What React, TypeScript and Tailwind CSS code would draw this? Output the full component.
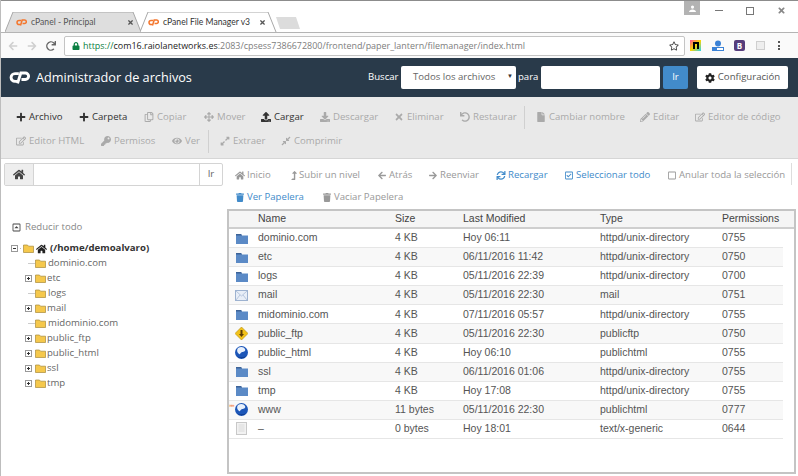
import React from "react";
import {
  FaPlus, FaRegCopy, FaArrowsAlt, FaUpload, FaDownload, FaTimes, FaUndo, FaFile, FaPencilAlt, FaRegEdit,
  FaKey, FaEye, FaExpandAlt, FaCompressAlt, FaHome, FaLevelUpAlt, FaArrowLeft, FaArrowRight, FaSync,
  FaRegCheckSquare, FaRegSquare, FaTrash, FaCog, FaRegCaretSquareUp, FaRegStar, FaLock, FaRedo,
} from "react-icons/fa";

const OPEN = "font-['Open_Sans',sans-serif]";

function CpLogo({ color, className }: { color: string; className: string }) {
  return (
    <svg viewBox="0 0 32 20" className={className} fill="none">
      <path d="M15 4H9a6 6 0 0 0 0 12h4" stroke={color} strokeWidth="4.4" />
      <path d="M13 19 18 3h7a5 5 0 0 1 0 10h-6" stroke={color} strokeWidth="4.4" />
    </svg>
  );
}

function Tab({ title, active }: { title: string; active?: boolean }) {
  return (
    <div className={`relative flex h-[20px] w-[137px] items-center ${active ? "z-10 pl-[8px] pr-[11px]" : "-mr-[2px] pl-[11px] pr-[8px]"}`}>
      <svg viewBox="0 0 137 20" preserveAspectRatio="none" className="absolute inset-0 h-full w-full">
        <path d="M0 20 8 0H128L136 20" fill={active ? "#ffffff" : "#dedede"} stroke="#a8a8a8" strokeWidth="1" />
      </svg>
      <CpLogo color="#f4772e" className="relative h-[9px] w-[11px] shrink-0" />
      <span className={`relative ml-[4px] flex-1 whitespace-nowrap font-['Lato',sans-serif] text-[8.6px] ${active ? "text-[#333]" : "text-[#555]"}`}>{title}</span>
      <FaTimes className="relative h-[7px] w-[7px] shrink-0 text-[#555]" />
    </div>
  );
}

function ChromeBar() {
  return (
    <div className="flex h-[58px] flex-col bg-white">
      <div className="h-px bg-[#8c8c8c]" />
      <div className="relative flex h-[32px] items-end border-b border-[#b4b4b4] pl-[4px]">
        <Tab title="cPanel - Principal" />
        <Tab title="cPanel File Manager v3" active />
        <svg viewBox="0 0 24 12" className="mb-[3px] ml-[-1px] h-[12px] w-[24px]">
          <path d="M0 0H20L24 12H4Z" fill="#dcdcdc" />
        </svg>
        <div className="flex-1" />
        <div className="absolute right-[98px] top-0 flex h-[14px] w-[16px] items-center justify-center bg-[#b3b3b3]">
          <svg viewBox="0 0 8 8" className="h-[7px] w-[7px]" fill="#fff">
            <circle cx="4" cy="2.4" r="1.8" /><path d="M0 8c0-2 2-3 4-3s4 1 4 3Z" />
          </svg>
        </div>
        <div className="absolute right-[12px] top-[5px] flex items-center gap-[23px]">
          <div className="h-px w-[8px] bg-[#777]" />
          <div className="h-[8px] w-[8px] border border-[#777]" />
          <FaTimes className="h-[9px] w-[9px] text-[#888]" />
        </div>
      </div>
      <div className="flex flex-1 items-center bg-[#fafafa] pl-[7px]">
        <FaArrowLeft className="h-[10px] w-[10px] text-[#cfcfcf]" />
        <FaArrowRight className="ml-[9px] h-[10px] w-[10px] text-[#cfcfcf]" />
        <FaRedo className="ml-[9px] h-[10px] w-[10px] text-[#666]" />
        <div className={`ml-[8px] flex h-[20px] w-[621px] items-center rounded-[2px] border border-[#c4c4c4] bg-white pl-[7px] pr-[5px] text-[8.95px] ${OPEN}`}>
          <FaLock className="h-[8px] w-[8px] text-[#0b8043]" />
          <span className="ml-[3px] text-[#0b8043]">https://</span>
          <span className="text-[#222]">com16.raiolanetworks.es</span>
          <span className="flex-1 text-[#7d7d7d]">:2083/cpsess7386672800/frontend/paper_lantern/filemanager/index.html</span>
          <FaRegStar className="h-[10px] w-[10px] text-[#444]" />
        </div>
        <div className="ml-[5px] flex items-center">
          <div className="flex h-[11px] w-[11px] items-center justify-center bg-[linear-gradient(135deg,#ff4f9a,#ffd400,#22d3ee)]">
            <div className="h-[7px] w-[6px] border-x-2 border-t-2 border-black" />
          </div>
          <svg viewBox="0 0 12 12" className="ml-[11px] h-[12px] w-[12px]">
            <circle cx="6" cy="3.5" r="3" fill="#3b82d6" />
            <rect x="0" y="7" width="12" height="4" fill="#3b82d6" />
            <rect x="5" y="8" width="6" height="2" fill="#fff" />
          </svg>
          <div className={`ml-[10px] flex h-[11px] w-[11px] items-center justify-center rounded-[2px] bg-[#563d7c] text-[8px] font-bold leading-none text-white ${OPEN}`}>B</div>
          <div className="ml-[11px] h-[9px] w-[9px] border border-[#cfcfcf] bg-[#eee]" />
          <div className="ml-[13px] flex flex-col gap-[1.5px]">
            <div className="h-[2px] w-[2px] bg-[#555]" />
            <div className="h-[2px] w-[2px] bg-[#555]" />
            <div className="h-[2px] w-[2px] bg-[#555]" />
          </div>
        </div>
      </div>
    </div>
  );
}

function Header() {
  return (
    <div className={`flex h-[39px] items-center whitespace-nowrap bg-[#293a4a] pl-[8px] text-[9.6px] text-white ${OPEN}`}>
      <CpLogo color="#ffffff" className="h-[13px] w-[21px]" />
      <span className="ml-[6px] w-[150px] text-[12.7px]">Administrador de archivos</span>
      <span className="ml-[182px] w-[30px]">Buscar</span>
      <div className="relative ml-[3px] flex h-[23px] w-[115px] items-center rounded-[2px] bg-white pl-[12px] text-[#666]">
        Todos los archivos
        <span className="absolute right-[3px] top-[6px] text-[6px] text-[#333]">▼</span>
      </div>
      <span className="ml-[2px] w-[20px]">para</span>
      <div className="ml-[3px] h-[23px] w-[119px] rounded-[2px] bg-white" />
      <div className="ml-[3px] flex h-[23px] w-[25px] items-center justify-center rounded-[2px] bg-[#428bca]">Ir</div>
      <div className="ml-[9px] flex h-[23px] w-[91px] items-center justify-center gap-[3px] rounded-[2px] bg-white text-[#555]">
        <FaCog className="h-[10px] w-[10px] text-[#222]" />Configuración
      </div>
    </div>
  );
}

type Item = { icon: React.ComponentType<{ className?: string }>; label: string; dark?: boolean; w: number };

function Tool({ it }: { it: Item }) {
  const I = it.icon;
  return (
    <div className={`flex items-center whitespace-nowrap ${it.dark ? "text-[#333]" : "text-[#aaa]"}`} style={{ width: it.w }}>
      <I className="mr-[3px] h-[10px] w-[10px] shrink-0" />
      <span>{it.label}</span>
    </div>
  );
}

const row1: Item[] = [
  { icon: FaPlus, label: "Archivo", dark: true, w: 63 },
  { icon: FaPlus, label: "Carpeta", dark: true, w: 65 },
  { icon: FaRegCopy, label: "Copiar", w: 60 },
  { icon: FaArrowsAlt, label: "Mover", w: 57 },
  { icon: FaUpload, label: "Cargar", dark: true, w: 59 },
  { icon: FaDownload, label: "Descargar", w: 74 },
  { icon: FaTimes, label: "Eliminar", w: 66 },
  { icon: FaUndo, label: "Restaurar", w: 64 },
];
const row1b: Item[] = [
  { icon: FaFile, label: "Cambiar nombre", w: 104 },
  { icon: FaPencilAlt, label: "Editar", w: 55 },
  { icon: FaRegEdit, label: "Editor de código", w: 90 },
];
const row2: Item[] = [
  { icon: FaRegEdit, label: "Editor HTML", w: 85 },
  { icon: FaKey, label: "Permisos", w: 71 },
  { icon: FaEye, label: "Ver", w: 36 },
];
const row2b: Item[] = [
  { icon: FaExpandAlt, label: "Extraer", w: 61 },
  { icon: FaCompressAlt, label: "Comprimir", w: 70 },
];

function Toolbar() {
  return (
    <div className={`flex h-[62px] flex-col gap-[1px] border-b border-[#d6d6d6] bg-[#e9e9e9] pl-[15px] pt-[9px] text-[9.6px] ${OPEN}`}>
      <div className="flex h-[23px] items-center">
        {row1.map((it, i) => <Tool key={i} it={it} />)}
        <div className="mr-[11px] h-[23px] w-px bg-[#d0d0d0]" />
        {row1b.map((it, i) => <Tool key={i} it={it} />)}
      </div>
      <div className="flex h-[23px] items-center">
        {row2.map((it, i) => <Tool key={i} it={it} />)}
        <div className="mr-[11px] h-[23px] w-px bg-[#d0d0d0]" />
        {row2b.map((it, i) => <Tool key={i} it={it} />)}
      </div>
    </div>
  );
}

function TreeFolder() {
  return (
    <svg viewBox="0 0 11 9" className="h-[9px] w-[11px] shrink-0">
      <path d="M.5 8.5V1h4l1 1.2h5v6.3Z" fill="#f5c84c" stroke="#a88a3a" strokeWidth=".7" />
    </svg>
  );
}

function Box({ minus }: { minus?: boolean }) {
  return (
    <div className="relative h-[7px] w-[7px] shrink-0 border border-[#999] bg-white">
      <div className="absolute left-[1px] top-[2px] h-px w-[3px] bg-[#333]" />
      {!minus && <div className="absolute left-[2px] top-[1px] h-[3px] w-px bg-[#333]" />}
    </div>
  );
}

const tree: [string, boolean][] = [
  ["dominio.com", false], ["etc", true], ["logs", false], ["mail", true], ["midominio.com", false],
  ["public_ftp", true], ["public_html", true], ["ssl", true], ["tmp", true],
];

function LeftPanel() {
  return (
    <div className={`flex w-[226px] shrink-0 flex-col pl-[3px] ${OPEN} text-[9.6px]`}>
      <div className="mt-[4px] flex h-[23px] w-[219px] items-stretch rounded-[2px] border border-[#d4d4d4]">
        <div className="flex w-[29px] items-center justify-center border-r border-[#d4d4d4] bg-[#eee]">
          <FaHome className="h-[11px] w-[12px] text-[#444]" />
        </div>
        <div className="flex-1 bg-white" />
        <div className="flex w-[23px] items-center justify-center border-l border-[#d4d4d4] text-[#666]">Ir</div>
      </div>
      <div className="mt-[34px] flex h-[15px] items-center pl-[8px] text-[#888]">
        <FaRegCaretSquareUp className="mr-[4px] h-[9px] w-[9px] text-[#444]" />Reducir todo
      </div>
      <div className="mt-[6px] flex h-[15px] items-center pl-[7px] font-bold text-[#333]">
        <Box minus />
        <div className="mx-[2px] h-px w-[1px] bg-[#bbb]" />
        <TreeFolder />
        <FaHome className="ml-[2px] h-[10px] w-[11px] text-[#222]" />
        <span className="ml-[3px] whitespace-nowrap">(/home/demoalvaro)</span>
      </div>
      {tree.map(([n, plus]) => (
        <div key={n} className="flex h-[15px] items-center pl-[21px] text-[#666]">
          {plus ? <Box /> : <div className="ml-[3px] h-px w-[4px] bg-[#ccc]" />}
          <div className={plus ? "h-px w-[3px]" : "h-px w-[3px] bg-[#ccc]"} />
          <TreeFolder />
          <span className={plus ? "ml-[1px]" : "ml-[2px]"}>{n}</span>
        </div>
      ))}
    </div>
  );
}

function Nav({ icon: I, label, cls, w, iconCls }: { icon: React.ComponentType<{ className?: string }>; label: string; cls: string; w: number; iconCls?: string }) {
  return (
    <div className={`flex items-center whitespace-nowrap ${cls}`} style={{ width: w }}>
      <I className={iconCls ?? "mr-[2px] h-[9px] w-[10px] shrink-0"} />
      <span>{label}</span>
    </div>
  );
}

type Kind = "folder" | "mail" | "ftp" | "globe" | "file";

function FileIcon({ kind }: { kind: Kind }) {
  if (kind === "folder")
    return (
      <svg viewBox="0 0 12 11" className="h-[11px] w-[12px]">
        <path d="M0 1h5l1 1.500h6V11H0Z" fill="#5b8ac6" />
        <path d="M0 1h5l1 1.500H0Z" fill="#3d6397" />
      </svg>
    );
  if (kind === "mail")
    return (
      <svg viewBox="0 0 13 11" className="h-[11px] w-[13px]">
        <rect x=".5" y=".5" width="12" height="10" fill="#e8eef7" stroke="#9db2d0" />
        <path d="M1 1l5.500 5L12 1M1 10l4-5M12 10 8 5" fill="none" stroke="#a9bbd6" strokeWidth=".8" />
      </svg>
    );
  if (kind === "ftp")
    return (
      <svg viewBox="0 0 13 13" className="h-[13px] w-[13px]">
        <path d="M6.500 0 13 6.500 6.500 13 0 6.500Z" fill="#f2c21a" stroke="#b38a0d" strokeWidth=".6" />
        <path d="M5.500 3h2v4.500h-2ZM4 7h5l-2.500 3Z" fill="#5c3d07" />
      </svg>
    );
  if (kind === "globe")
    return (
      <svg viewBox="0 0 13 13" className="h-[13px] w-[13px]">
        <circle cx="6.500" cy="6.500" r="6.500" fill="#1c56b8" />
        <path d="M3 2c3-2 6-1 7 1 1 2-1 3-3 3-2 1-2 3-3 2C3 7 1 5 3 2Z" fill="#e8f0fb" />
        <path d="M2 10c2 2 6 2 9 0-2 3-7 3-9 0Z" fill="#0a2f75" />
      </svg>
    );
  return (
    <svg viewBox="0 0 11 13" className="h-[13px] w-[11px]">
      <rect x=".5" y=".5" width="10" height="12" fill="#f2f2f2" stroke="#c8c8c8" />
      <path d="M2.500 3h6M2.500 5h6M2.500 7h6M2.500 9h6" stroke="#d4d4d4" strokeWidth=".8" />
    </svg>
  );
}

const files: [Kind, string, string, string, string, string][] = [
  ["folder", "dominio.com", "4 KB", "Hoy 06:11", "httpd/unix-directory", "0755"],
  ["folder", "etc", "4 KB", "06/11/2016 11:42", "httpd/unix-directory", "0750"],
  ["folder", "logs", "4 KB", "05/11/2016 22:39", "httpd/unix-directory", "0700"],
  ["mail", "mail", "4 KB", "05/11/2016 22:30", "mail", "0751"],
  ["folder", "midominio.com", "4 KB", "07/11/2016 05:57", "httpd/unix-directory", "0755"],
  ["ftp", "public_ftp", "4 KB", "05/11/2016 22:30", "publicftp", "0750"],
  ["globe", "public_html", "4 KB", "Hoy 06:10", "publichtml", "0755"],
  ["folder", "ssl", "4 KB", "06/11/2016 01:06", "httpd/unix-directory", "0755"],
  ["folder", "tmp", "4 KB", "Hoy 17:08", "httpd/unix-directory", "0755"],
  ["globe", "www", "11 bytes", "05/11/2016 22:30", "publichtml", "0777"],
  ["file", "–", "0 bytes", "Hoy 18:01", "text/x-generic", "0644"],
];

const COLS = "grid grid-cols-[29px_137px_68px_137px_122px_1fr] items-center";

function FileTable() {
  return (
    <div className="mt-[2px] flex h-[265px] w-[569px] flex-col overflow-hidden border-2 border-[#c4c4c4] bg-white font-['Liberation_Sans',sans-serif] text-[10.5px] text-[#555]">
      <div className={`${COLS} h-[18px] shrink-0 border-b-2 border-[#cfcfcf] bg-[#f5f5f5] text-[#444]`}>
        <div /><div>Name</div><div>Size</div><div>Last Modified</div><div>Type</div><div>Permissions</div>
      </div>
      {files.map((f, i) => (
        <div key={f[1]} className={`${COLS} relative mr-[11px] h-[19.1px] shrink-0 border-b border-[#e6e6e6] ${i % 2 ? "bg-[#f8f8f8]" : "bg-white"}`}>
          <div className="flex justify-center pr-[4px]"><FileIcon kind={f[0]} /></div>
          <div>{f[1]}</div><div>{f[2]}</div><div>{f[3]}</div><div>{f[4]}</div><div>{f[5]}</div>
          {f[1] === "www" && <span className="absolute left-0 top-[1px] text-[6px] leading-none tracking-[-1px] text-[#f4772e]">»»</span>}
        </div>
      ))}
    </div>
  );
}

function RightPanel() {
  return (
    <div className={`flex flex-1 flex-col text-[9.6px] ${OPEN}`}>
      <div className="relative mt-[7px] flex h-[19px] items-center pl-[8px]">
        <Nav icon={FaHome} label="Inicio" cls="text-[#999]" w={56} />
        <Nav icon={FaLevelUpAlt} label="Subir un nivel" cls="text-[#999]" w={86} iconCls="mr-[2px] h-[9px] w-[6px] shrink-0" />
        <Nav icon={FaArrowLeft} label="Atrás" cls="text-[#999]" w={51} />
        <Nav icon={FaArrowRight} label="Reenviar" cls="text-[#999]" w={68} />
        <Nav icon={FaSync} label="Recargar" cls="text-[#428bca]" w={68} />
        <Nav icon={FaRegCheckSquare} label="Seleccionar todo" cls="text-[#428bca]" w={103} />
        <Nav icon={FaRegSquare} label="Anular toda la selección" cls="text-[#999]" w={120} />
        <div className="absolute right-[6px] top-[-3px] h-[22px] w-px bg-[#ddd]" />
      </div>
      <div className="mt-[3px] flex h-[19px] items-center pl-[8px]">
        <Nav icon={FaTrash} label="Ver Papelera" cls="text-[#428bca]" w={87} />
        <Nav icon={FaTrash} label="Vaciar Papelera" cls="text-[#999]" w={100} />
      </div>
      <FileTable />
    </div>
  );
}

export default function App() {
  return (
    <div className="flex h-[476px] w-[798px] flex-col overflow-hidden border-l border-[#bdbdbd] bg-white">
      <ChromeBar />
      <Header />
      <Toolbar />
      <div className="flex flex-1 overflow-hidden">
        <LeftPanel />
        <RightPanel />
      </div>
    </div>
  );
}
